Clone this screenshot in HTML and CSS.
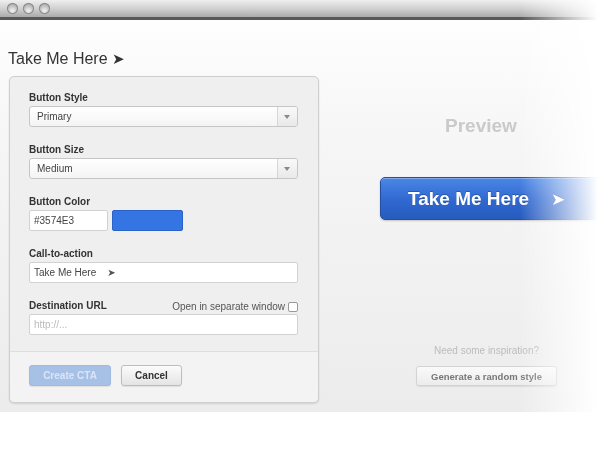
FILE: index.html
```html
<!DOCTYPE html>
<html lang="en">
<head>
  <meta charset="UTF-8" />
  <title>Take Me Here - CTA builder</title>
  <link rel="stylesheet" href="styles.css">
</head>
<body>

<div class="window">
  <div class="titlebar">
    <span class="light"></span>
    <span class="light"></span>
    <span class="light"></span>
  </div>

  <div class="content">
    <h1 class="page-title">Take Me Here <span class="arrow">&#10148;</span></h1>

    <div class="main">
      <form class="panel" onsubmit="return false">
        <div class="fields">
          <div class="field">
            <label class="label">Button Style</label>
            <div class="select">
              <span class="select-text">Primary</span>
              <span class="caret"></span>
            </div>
          </div>

          <div class="field">
            <label class="label">Button Size</label>
            <div class="select">
              <span class="select-text">Medium</span>
              <span class="caret"></span>
            </div>
          </div>

          <div class="field">
            <label class="label">Button Color</label>
            <div class="color-row">
              <input class="input hex" type="text" value="#3574E3" />
              <span class="swatch"></span>
            </div>
          </div>

          <div class="field">
            <label class="label">Call-to-action</label>
            <div class="input cta-input">Take Me Here <span class="arrow small">&#10148;</span></div>
          </div>

          <div class="field">
            <div class="label-row">
              <label class="label">Destination URL</label>
              <label class="check-label">Open in separate window <span class="checkbox"></span></label>
            </div>
            <input class="input" type="text" placeholder="http://..." />
          </div>
        </div>

        <div class="panel-footer">
          <button class="btn btn-primary" disabled>Create CTA</button>
          <button class="btn">Cancel</button>
        </div>
      </form>

      <div class="preview">
        <h2 class="preview-title">Preview</h2>
        <a class="big-btn" href="#">Take Me Here <span class="arrow big">&#10148;</span></a>
        <div class="inspire">
          <p class="inspire-text">Need some inspiration?</p>
          <button class="btn btn-random">Generate a random style</button>
        </div>
      </div>
    </div>
  </div>
</div>

</body>
</html>
```

FILE: styles.css
```css
body {
  margin: 0;
  background: #fff;
  font-family: "Liberation Sans", Arial, sans-serif;
  color: #333;
}

.window {
  width: 600px;
  -webkit-mask-image: linear-gradient(to right, #000 520px, transparent 598px);
  mask-image: linear-gradient(to right, #000 520px, transparent 598px);
}

.titlebar {
  height: 20px;
  padding: 3px 0 0 7px;
  box-sizing: border-box;
  display: flex;
  gap: 5px;
  background: linear-gradient(#efefef, #cdcdcd 55%, #aaaaaa);
  border-bottom: 3px solid #585858;
  box-shadow: 0 1px 2px rgba(0, 0, 0, 0.35);
}

.light {
  width: 11px;
  height: 11px;
  border-radius: 50%;
  background: radial-gradient(circle at 50% 70%, #f4f4f4, #bdbdbd 55%, #8e8e8e);
  box-shadow: inset 0 0 0 1px #8a8a8a;
}

.content {
  height: 392px;
  background: linear-gradient(#fefefe, #f6f6f6 30%, #ececec);
  padding: 29px 0 0 0;
  box-sizing: border-box;
}

.page-title {
  margin: 0 0 7px 8px;
  font-size: 16px;
  font-weight: normal;
  color: #333;
  line-height: 20px;
}

.arrow {
  font-family: "DejaVu Sans", sans-serif;
  font-size: 15px;
}

.main {
  display: flex;
}

.panel {
  margin: 0 0 0 9px;
  width: 310px;
  height: 327px;
  flex-shrink: 0;
  box-sizing: border-box;
  border: 1px solid #cfcfcf;
  border-radius: 5px;
  background: #efefef;
  box-shadow: 0 1px 2px rgba(0, 0, 0, 0.12);
  display: flex;
  flex-direction: column;
}

.fields {
  padding: 15px 20px 0 19px;
  display: flex;
  flex-direction: column;
  gap: 17px;
  flex: 1;
}

.field {
  display: flex;
  flex-direction: column;
  gap: 2px;
}

.label {
  font-size: 10px;
  font-weight: bold;
  color: #333;
  line-height: 12px;
}

.label-row {
  display: flex;
  justify-content: space-between;
  align-items: flex-end;
  height: 12px;
}

.check-label {
  font-size: 10px;
  color: #555;
  display: flex;
  align-items: center;
  gap: 3px;
}

.checkbox {
  width: 8px;
  height: 8px;
  border: 1px solid #999;
  border-radius: 2px;
  background: #fff;
}

.select {
  height: 21px;
  box-sizing: border-box;
  border: 1px solid #c6c6c6;
  border-radius: 3px;
  background: linear-gradient(#fff, #f4f4f4);
  display: flex;
  align-items: center;
  font-size: 10px;
  color: #444;
}

.select-text {
  flex: 1;
  padding-left: 7px;
}

.caret {
  width: 19px;
  height: 100%;
  border-left: 1px solid #d6d6d6;
  background: linear-gradient(#f9f9f9, #e9e9e9);
  border-radius: 0 2px 2px 0;
  position: relative;
}

.caret::after {
  content: "";
  position: absolute;
  left: 6px;
  top: 8px;
  border-left: 3px solid transparent;
  border-right: 3px solid transparent;
  border-top: 4px solid #8a8a8a;
}

.input {
  height: 21px;
  box-sizing: border-box;
  border: 1px solid #d2d2d2;
  border-radius: 2px;
  background: #fff;
  font-family: inherit;
  font-size: 10px;
  color: #444;
  padding: 0 4px;
  width: 100%;
  outline: none;
}

.input::placeholder {
  color: #bbb;
}

.cta-input {
  display: flex;
  align-items: center;
  gap: 11px;
}

.arrow.small {
  font-size: 10px;
  color: #555;
}

.color-row {
  display: flex;
  gap: 4px;
}

.hex {
  width: 79px;
}

.swatch {
  width: 71px;
  height: 21px;
  box-sizing: border-box;
  background: #3574e3;
  border: 1px solid #2a62c9;
  border-radius: 2px;
}

.panel-footer {
  height: 51px;
  box-sizing: border-box;
  border-top: 1px solid #dedede;
  background: #f3f3f3;
  border-radius: 0 0 5px 5px;
  padding: 0 0 4px 19px;
  display: flex;
  align-items: center;
  gap: 10px;
}

.btn {
  height: 21px;
  box-sizing: border-box;
  font-family: inherit;
  font-size: 10px;
  font-weight: bold;
  color: #333;
  border: 1px solid #bdbdbd;
  border-radius: 3px;
  background: linear-gradient(#fbfbfb, #e4e4e4);
  box-shadow: 0 1px 1px rgba(0, 0, 0, 0.08);
  padding: 0;
  width: 61px;
}

.btn-primary {
  width: 82px;
  background: #a7c1e6;
  border-color: #a0b9df;
  color: #d9e5f6;
}

.preview {
  flex: 1;
  display: flex;
  flex-direction: column;
  min-width: 0;
}

.preview-title {
  margin: 39px 0 0 126px;
  font-size: 19px;
  font-weight: bold;
  color: #cacaca;
  line-height: 22px;
}

.big-btn {
  margin: 40px 0 0 61px;
  width: 230px;
  height: 43px;
  flex-shrink: 0;
  box-sizing: border-box;
  border: 1px solid #244f9e;
  border-radius: 5px;
  background: linear-gradient(#4b86e6, #3068d0 55%, #275bbd);
  box-shadow: inset 0 1px 0 rgba(255, 255, 255, 0.3), 0 1px 2px rgba(0, 0, 0, 0.2);
  color: #fff;
  text-decoration: none;
  font-size: 19px;
  font-weight: bold;
  display: flex;
  align-items: center;
  padding-left: 27px;
  gap: 22px;
  text-shadow: 0 -1px 0 rgba(0, 0, 0, 0.25);
}

.arrow.big {
  font-size: 17px;
}

.inspire {
  margin: 125px 0 0 97px;
  width: 141px;
  display: flex;
  flex-direction: column;
  align-items: center;
}

.inspire-text {
  margin: 0 0 9px 0;
  font-size: 10px;
  color: #bcbcbc;
  line-height: 12px;
}

.btn-random {
  width: 141px;
  height: 20px;
  font-size: 9.5px;
  color: #777;
  border-color: #d3d3d3;
  background: linear-gradient(#fafafa, #ececec);
}
```
